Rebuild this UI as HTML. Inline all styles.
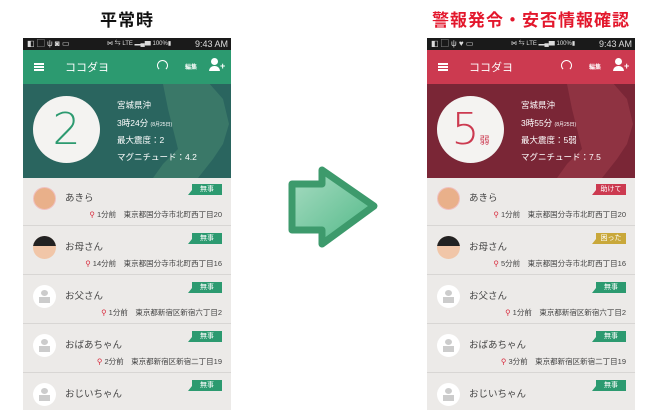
<!DOCTYPE html>
<html><head><meta charset="utf-8">
<style>
*{margin:0;padding:0;box-sizing:border-box}
body{width:657px;height:420px;background:#fff;position:relative;overflow:hidden;font-family:"Liberation Sans","Noto Sans CJK JP",sans-serif}
.t{position:absolute;top:6px;font-size:17px;font-weight:bold;letter-spacing:1px;text-align:center}
.ph{position:absolute;top:38px;width:208px;height:372px;background:#eceae8;overflow:hidden}
.sb{position:absolute;left:0;top:0;width:208px;height:12px;background:#1a1a1a;color:#ddd;font-size:8px;line-height:12px}
.hd{position:absolute;left:0;top:12px;width:208px;height:34px}
.pn{position:absolute;left:0;top:46px;width:208px;height:94px;overflow:hidden}
.circ{position:absolute;left:10px;top:12px;width:67px;height:67px;border-radius:50%;background:#f4f3f1;text-align:center;font-size:44px;font-weight:300;line-height:67px;font-family:"DejaVu Sans","Liberation Sans",sans-serif;font-weight:200}
.info{position:absolute;left:94px;color:#fff;font-size:8.5px;white-space:nowrap}
.it{position:absolute;left:0;width:208px;height:48px;background:#eceae8;border-bottom:1px solid #d8d6d4}
.av{position:absolute;left:10px;top:9px;width:23px;height:23px;border-radius:50%;background:#fff;overflow:hidden}
.nm{position:absolute;left:42px;top:12px;font-size:9.5px;color:#444}
.bd{position:absolute;right:9px;top:6px;width:30px;height:11px;color:#fff;font-size:7px;line-height:11px;text-align:center}
.bd:before{content:"";position:absolute;left:-4px;bottom:0;border-left:4px solid transparent;border-bottom:5px solid;border-bottom-color:inherit}
.lc{position:absolute;right:9px;top:31px;font-size:7.5px;color:#444;white-space:nowrap}
.lc b{color:#d8283a;font-weight:normal}
</style></head><body>

<div class="t" style="left:80px;width:94px;color:#111">平常時</div>
<div class="t" style="left:418px;width:226px;color:#e3172c">警報発令・安否情報確認</div>

<svg style="position:absolute;left:284px;top:162px" width="100" height="92" viewBox="0 0 100 92">
<defs><linearGradient id="g" x1="0" y1="0" x2="1" y2="1"><stop offset="0" stop-color="#a9dcc3"/><stop offset="1" stop-color="#4fb886"/></linearGradient></defs>
<path d="M8 22 H38 V8 L90 44 L38 82 V68 H8 Z" fill="url(#g)" stroke="#3d9a6c" stroke-width="7" stroke-linejoin="round"/>
</svg>

<div class="ph" style="left:23px">
 <div class="sb"><span style="position:absolute;left:4px">◧ ▢ ψ ◙ ▭</span><span style="position:absolute;left:84px;font-size:6px">⋈ ⇆ LTE ▂▄▆ 100%▮</span><span style="position:absolute;right:3px;font-size:9px">9:43 AM</span></div>
 <div class="hd" style="background:#2c9a70">
  <div style="position:absolute;left:11px;top:13px;width:10px;height:1.5px;background:#fff;box-shadow:0 3px #fff,0 6px #fff"></div>
  <div style="position:absolute;left:42px;top:9px;color:#fff;font-size:11px">ココダヨ</div>
  <div style="position:absolute;left:134px;top:10px;width:11px;height:11px;border:1.5px solid #fff;border-radius:50%;border-bottom-color:transparent"></div>
  <div style="position:absolute;left:162px;top:12px;color:#fff;font-size:6px;font-weight:bold">編集</div>
  <div style="position:absolute;left:188px;top:8px;width:7px;height:7px;border-radius:50%;background:#fff"></div>
  <div style="position:absolute;left:186px;top:16px;width:11px;height:5px;border-radius:5px 5px 0 0;background:#fff"></div>
  <div style="position:absolute;left:197px;top:11px;color:#fff;font-size:9px;font-weight:bold">+</div>
 </div>
 <div class="pn" style="background:#2a655f">
  <svg style="position:absolute;left:0;top:0" width="208" height="94"><path d="M140 0 L185 -2 L200 15 L206 40 L200 60 L190 75 L175 94 L130 94 L140 80 L155 65 L150 45 L145 25 Z" fill="#3a7868"/></svg>
  <div class="circ" style="color:#2c9a70">2</div>
  <div class="info" style="top:15px">宮城県沖</div>
  <div class="info" style="top:33px">3時24分 <span style="font-size:5px">(8月25日)</span></div>
  <div class="info" style="top:50px">最大震度：2</div>
  <div class="info" style="top:67px">マグニチュード：4.2</div>
 </div>
 <div class="it" style="top:140px"><div class="av" style="background:#e9b08a;border:1px solid #f0c0c0"></div><div class="nm">あきら</div><div class="bd" style="background:#2c9a70;border-color:#2c9a70">無事</div><div class="lc"><b>⚲</b> 1分前　東京都国分寺市北町西丁目20</div></div>
 <div class="it" style="top:189px"><div class="av" style="background:#f1c6a8"><div style="width:23px;height:10px;background:#222;border-radius:10px 10px 0 0"></div></div><div class="nm">お母さん</div><div class="bd" style="background:#2c9a70;border-color:#2c9a70">無事</div><div class="lc"><b>⚲</b> 14分前　東京都国分寺市北町西丁目16</div></div>
 <div class="it" style="top:238px"><div class="av"><div style="position:absolute;left:8px;top:5px;width:7px;height:6px;border-radius:50%;background:#ccc"></div><div style="position:absolute;left:6px;top:12px;width:11px;height:6px;background:#ccc"></div></div><div class="nm">お父さん</div><div class="bd" style="background:#2c9a70;border-color:#2c9a70">無事</div><div class="lc"><b>⚲</b> 1分前　東京都新宿区新宿六丁目2</div></div>
 <div class="it" style="top:287px"><div class="av"><div style="position:absolute;left:8px;top:5px;width:7px;height:6px;border-radius:50%;background:#ccc"></div><div style="position:absolute;left:6px;top:12px;width:11px;height:6px;background:#ccc"></div></div><div class="nm">おばあちゃん</div><div class="bd" style="background:#2c9a70;border-color:#2c9a70">無事</div><div class="lc"><b>⚲</b> 2分前　東京都新宿区新宿二丁目19</div></div>
 <div class="it" style="top:336px"><div class="av"><div style="position:absolute;left:8px;top:5px;width:7px;height:6px;border-radius:50%;background:#ccc"></div><div style="position:absolute;left:6px;top:12px;width:11px;height:6px;background:#ccc"></div></div><div class="nm">おじいちゃん</div><div class="bd" style="background:#2c9a70;border-color:#2c9a70">無事</div></div>
</div>

<div class="ph" style="left:427px">
 <div class="sb"><span style="position:absolute;left:4px">◧ ▢ ψ ♥ ▭</span><span style="position:absolute;left:84px;font-size:6px">⋈ ⇆ LTE ▂▄▆ 100%▮</span><span style="position:absolute;right:3px;font-size:9px">9:43 AM</span></div>
 <div class="hd" style="background:#cc3a50">
  <div style="position:absolute;left:11px;top:13px;width:10px;height:1.5px;background:#fff;box-shadow:0 3px #fff,0 6px #fff"></div>
  <div style="position:absolute;left:42px;top:9px;color:#fff;font-size:11px">ココダヨ</div>
  <div style="position:absolute;left:134px;top:10px;width:11px;height:11px;border:1.5px solid #fff;border-radius:50%;border-bottom-color:transparent"></div>
  <div style="position:absolute;left:162px;top:12px;color:#fff;font-size:6px;font-weight:bold">編集</div>
  <div style="position:absolute;left:188px;top:8px;width:7px;height:7px;border-radius:50%;background:#fff"></div>
  <div style="position:absolute;left:186px;top:16px;width:11px;height:5px;border-radius:5px 5px 0 0;background:#fff"></div>
  <div style="position:absolute;left:197px;top:11px;color:#fff;font-size:9px;font-weight:bold">+</div>
 </div>
 <div class="pn" style="background:#7a2636">
  <svg style="position:absolute;left:0;top:0" width="208" height="94"><path d="M140 0 L185 -2 L200 15 L206 40 L200 60 L190 75 L175 94 L130 94 L140 80 L155 65 L150 45 L145 25 Z" fill="#8f3342"/></svg>
  <div class="circ" style="color:#cc3a50">5<span style="font-size:10px;font-weight:normal">弱</span></div>
  <div class="info" style="top:15px">宮城県沖</div>
  <div class="info" style="top:33px">3時55分 <span style="font-size:5px">(8月25日)</span></div>
  <div class="info" style="top:50px">最大震度：5弱</div>
  <div class="info" style="top:67px">マグニチュード：7.5</div>
 </div>
 <div class="it" style="top:140px"><div class="av" style="background:#e9b08a;border:1px solid #f0c0c0"></div><div class="nm">あきら</div><div class="bd" style="background:#cc3a50;border-color:#cc3a50">助けて</div><div class="lc"><b>⚲</b> 1分前　東京都国分寺市北町西丁目20</div></div>
 <div class="it" style="top:189px"><div class="av" style="background:#f1c6a8"><div style="width:23px;height:10px;background:#222;border-radius:10px 10px 0 0"></div></div><div class="nm">お母さん</div><div class="bd" style="background:#c9a83a;border-color:#c9a83a">困った</div><div class="lc"><b>⚲</b> 5分前　東京都国分寺市北町西丁目16</div></div>
 <div class="it" style="top:238px"><div class="av"><div style="position:absolute;left:8px;top:5px;width:7px;height:6px;border-radius:50%;background:#ccc"></div><div style="position:absolute;left:6px;top:12px;width:11px;height:6px;background:#ccc"></div></div><div class="nm">お父さん</div><div class="bd" style="background:#2c9a70;border-color:#2c9a70">無事</div><div class="lc"><b>⚲</b> 1分前　東京都新宿区新宿六丁目2</div></div>
 <div class="it" style="top:287px"><div class="av"><div style="position:absolute;left:8px;top:5px;width:7px;height:6px;border-radius:50%;background:#ccc"></div><div style="position:absolute;left:6px;top:12px;width:11px;height:6px;background:#ccc"></div></div><div class="nm">おばあちゃん</div><div class="bd" style="background:#2c9a70;border-color:#2c9a70">無事</div><div class="lc"><b>⚲</b> 3分前　東京都新宿区新宿二丁目19</div></div>
 <div class="it" style="top:336px"><div class="av"><div style="position:absolute;left:8px;top:5px;width:7px;height:6px;border-radius:50%;background:#ccc"></div><div style="position:absolute;left:6px;top:12px;width:11px;height:6px;background:#ccc"></div></div><div class="nm">おじいちゃん</div><div class="bd" style="background:#2c9a70;border-color:#2c9a70">無事</div></div>
</div>

</body></html>
